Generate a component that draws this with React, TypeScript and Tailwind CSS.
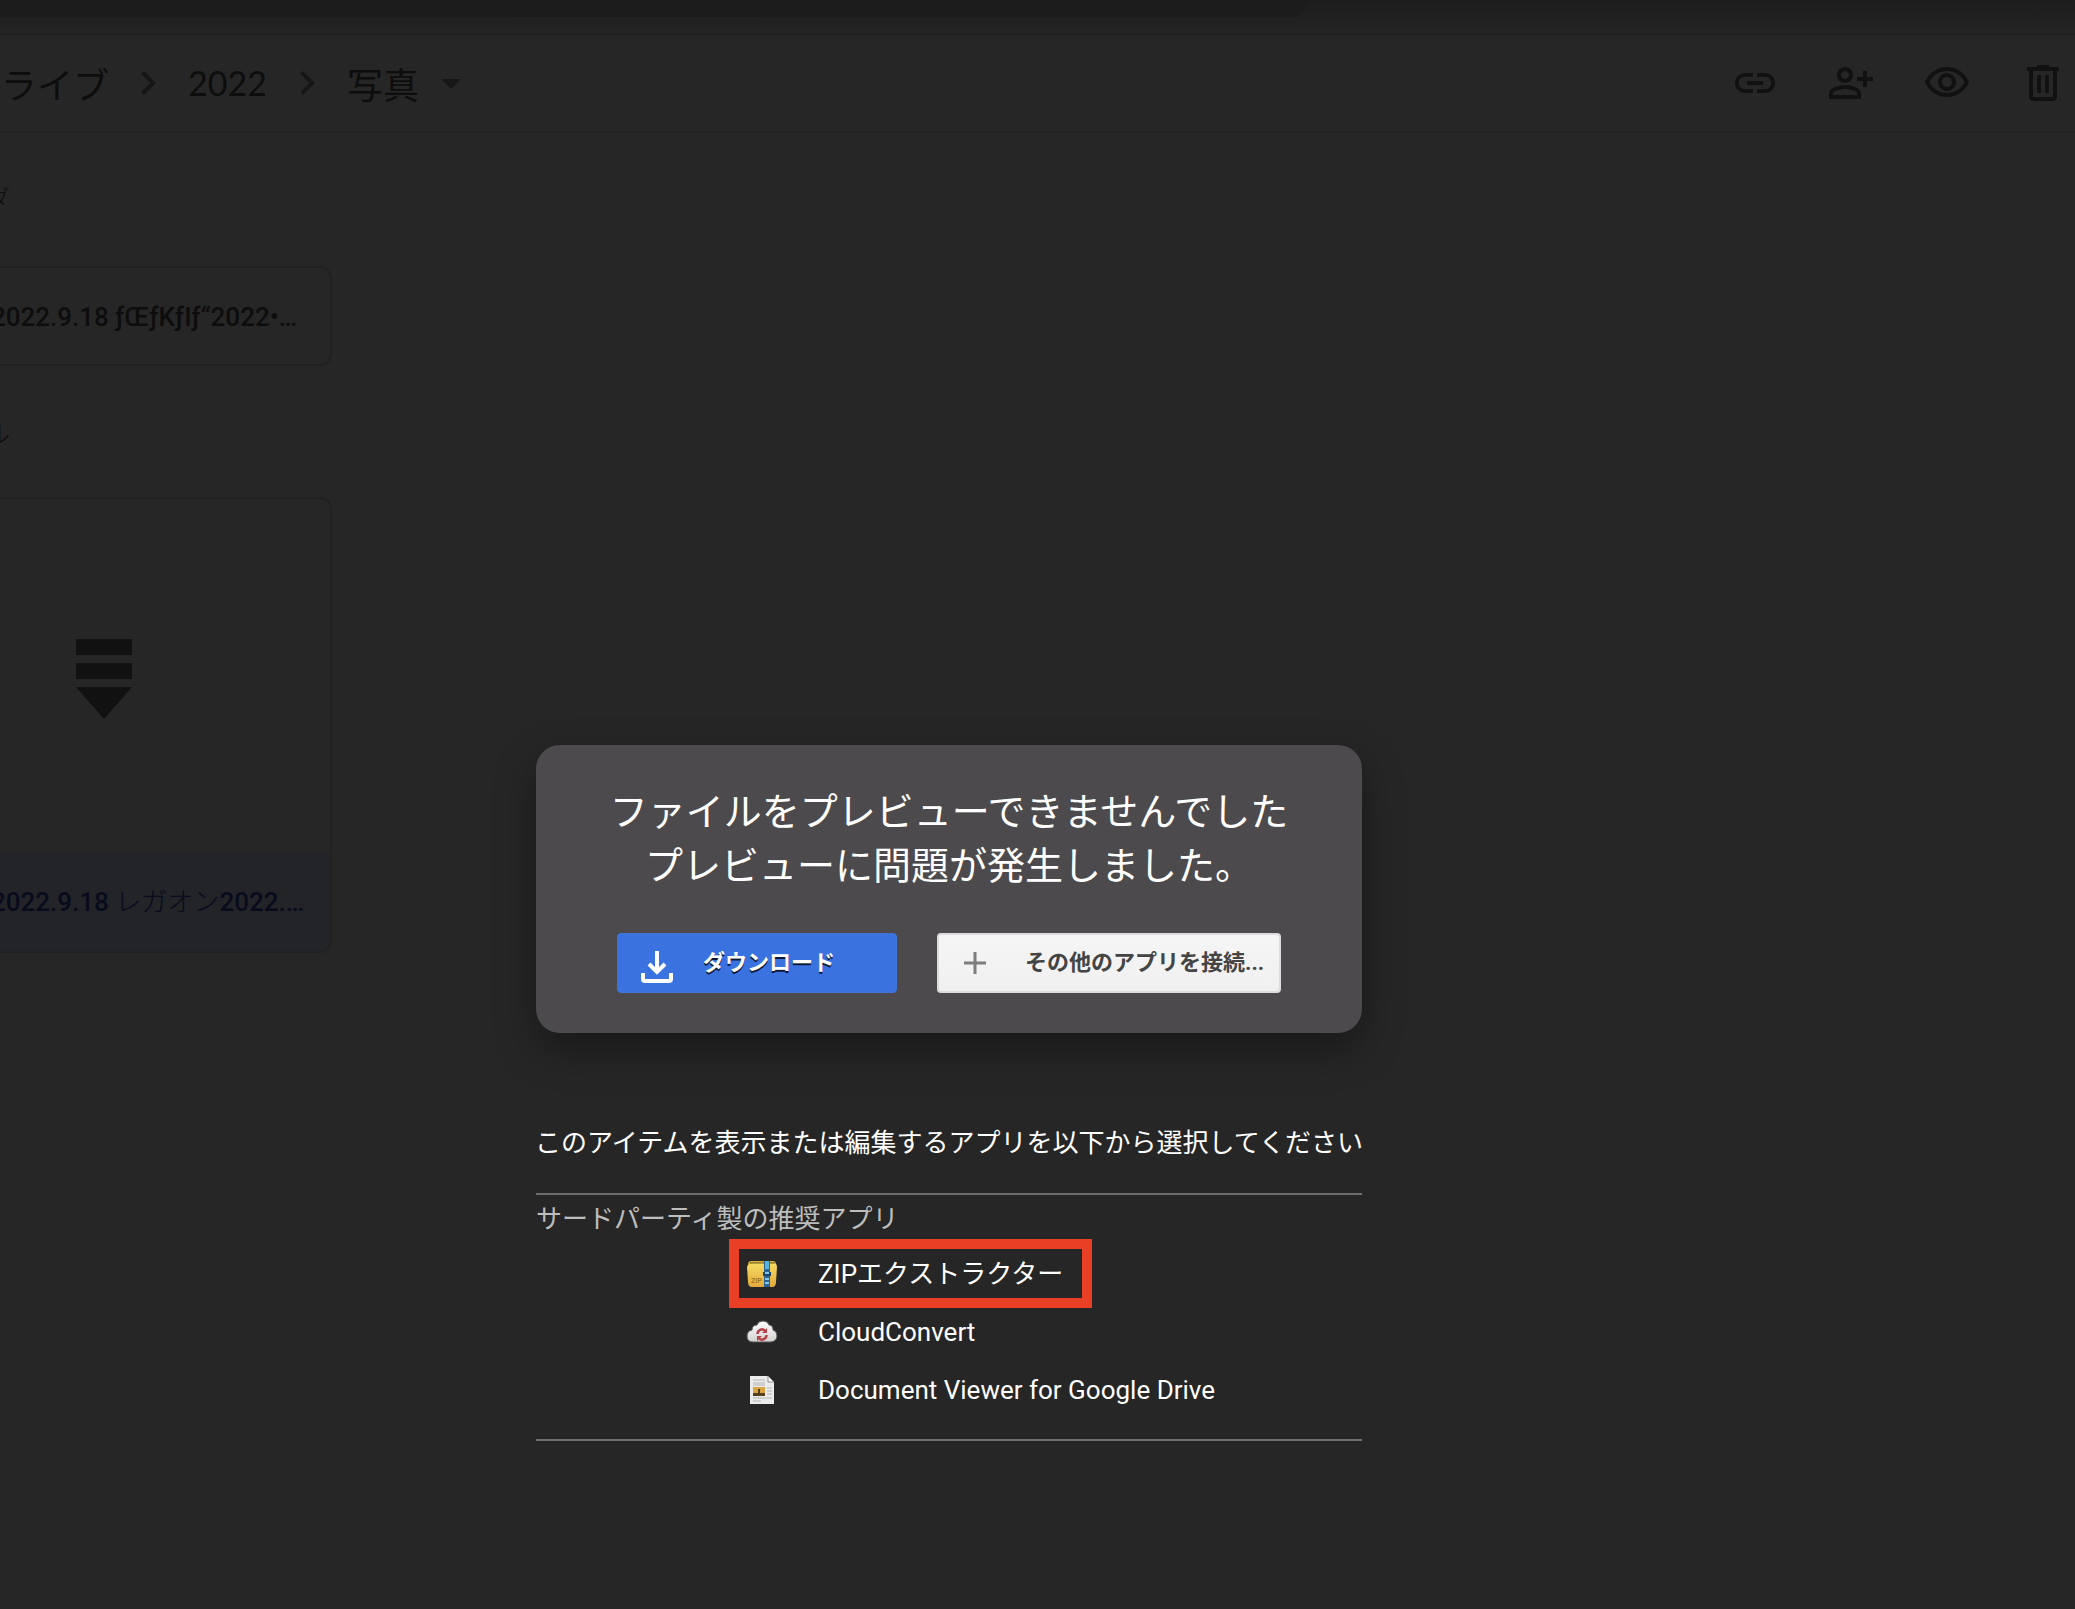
import React from "react";

const jp = "font-['Roboto','Noto_Sans_CJK_JP',sans-serif]";

function Glyph({ d }: { d: string }) {
  return (
    <svg viewBox="0 0 24 24" className="size-12 shrink-0" fill="currentColor" aria-hidden="true">
      <path fillRule="evenodd" d={d} />
    </svg>
  );
}

const chevron = "M10 6 8.59 7.41 13.17 12l-4.58 4.59L10 18l6-6z";
const caret = "M7 10l5 5 5-5z";

const actions = [
  {
    label: "リンクを取得",
    d: "M3.9 12c0-1.71 1.39-3.1 3.1-3.1h4V7H7c-2.76 0-5 2.24-5 5s2.24 5 5 5h4v-1.9H7c-1.71 0-3.1-1.39-3.1-3.1zM8 13h8v-2H8v2zm9-6h-4v1.9h4c1.71 0 3.1 1.39 3.1 3.1s-1.39 3.1-3.1 3.1h-4V17h4c2.76 0 5-2.24 5-5s-2.24-5-5-5z",
  },
  {
    label: "共有",
    d: "M13 8c0-2.21-1.79-4-4-4S5 5.79 5 8s1.79 4 4 4 4-1.79 4-4zm-2 0c0 1.1-.9 2-2 2s-2-.9-2-2 .9-2 2-2 2 .9 2 2zM1 20v-3c0-2.66 5.33-4 8-4s8 1.34 8 4v3zM3 18h12v-1c0-.7-3.3-2-6-2s-6 1.3-6 2zM20 14v-3h3V9h-3V6h-2v3h-3v2h3v3h2z",
  },
  {
    label: "プレビュー",
    d: "M12 6c3.79 0 7.17 2.13 8.82 5.5C19.17 14.87 15.79 17 12 17s-7.17-2.13-8.82-5.5C4.83 8.13 8.21 6 12 6m0-2C7 4 2.73 7.11 1 11.5 2.73 15.89 7 19 12 19s9.27-3.11 11-7.5C21.27 7.11 17 4 12 4zm0 5c1.38 0 2.5 1.12 2.5 2.5S13.38 14 12 14s-2.5-1.12-2.5-2.5S10.62 9 12 9m0-2c-2.48 0-4.5 2.02-4.5 4.5S9.52 16 12 16s4.5-2.02 4.5-4.5S14.48 7 12 7z",
  },
  {
    label: "削除",
    d: "M9 3v1H4v2h1v13c0 1.1.9 2 2 2h10c1.1 0 2-.9 2-2V6h1V4h-5V3H9zM7 6h10v13H7V6zM9 8v9h2V8H9zm4 0v9h2V8h-2z",
  },
];

function ZipIcon() {
  return (
    <svg viewBox="0 0 32 32" className="size-8 shrink-0" aria-hidden="true">
      <defs>
        <linearGradient id="zipBody" x1="0" y1="0" x2="0" y2="1">
          <stop offset="0" stopColor="#f7dc62" />
          <stop offset="1" stopColor="#e2a93a" />
        </linearGradient>
      </defs>
      <path d="M5 3h22q3 0 3 4v3H2V7q0-4 3-4z" fill="#d9b040" />
      <path d="M4 6q1-1 3-1h20q4 0 4 4l-1 15q0 5-4 5H6q-4 0-4-5L1 9q0-2 3-3z" fill="url(#zipBody)" />
      <path d="M4 5h25" stroke="#6b5a20" />
      <path d="M18 3h6v26h-6z" fill="#2c6593" />
      <path d="M19 3h4v8h-4z" fill="#55b4dc" />
      <path d="M17 14h8v4h-8z" fill="#1c4468" />
      <path d="M19 15h4M19 21h4M19 25h4" stroke="#83c7e8" strokeWidth="2" />
      <text x="5" y="25" fontSize="7" fontWeight="700" fontFamily="Roboto" fill="#a87822">ZIP</text>
    </svg>
  );
}

function CloudIcon() {
  return (
    <svg viewBox="0 0 32 32" className="size-8 shrink-0" aria-hidden="true">
      <defs>
        <linearGradient id="cloudBody" x1="0" y1="0" x2="0" y2="1">
          <stop offset="0" stopColor="#ffffff" />
          <stop offset="1" stopColor="#d3cfcf" />
        </linearGradient>
      </defs>
      <path
        d="M7 26q-6 0-6-6 0-5 5-6 0-5 5-5 1-4 6-4t6 4q4 0 4 5 4 1 4 6t-6 6z"
        fill="url(#cloudBody)"
        stroke="#555555"
        strokeWidth="1"
      />
      <path d="M11.5 18a4.5 4.5 0 0 1 7.5-3.4M20.500 19a4.500 4.500 0 0 1-7.500 3.400" fill="none" stroke="#b5444a" strokeWidth="2.5" />
      <path d="M21 12v5h-5zM11 25v-5h5z" fill="#b5444a" />
    </svg>
  );
}

function DocIcon() {
  return (
    <svg viewBox="0 0 32 32" className="size-8 shrink-0" aria-hidden="true">
      <path d="M4 2h18l6 6v22H4z" fill="#ebebeb" />
      <path d="M22 2v6h6z" fill="#ffffff" stroke="#8c8c8c" strokeWidth="1" />
      <path d="M7 6h12M7 9h12M7 11h12M21 14h5M21 17h5M21 20h5M7 24h19M7 27h8" stroke="#b5b5b5" />
      <path d="M7 13h12v9H7z" fill="#d9a441" />
      <path d="M7 19h12v3H7z" fill="#54401c" />
      <path d="M13 15v5" stroke="#54401c" strokeWidth="2" />
    </svg>
  );
}

const apps = [
  { name: "ZIPエクストラクター", Icon: ZipIcon, marked: true },
  { name: "CloudConvert", Icon: CloudIcon, marked: false },
  { name: "Document Viewer for Google Drive", Icon: DocIcon, marked: false },
];

function ClippedLabel({ children, className }: { children: React.ReactNode; className: string }) {
  return (
    <div className={`flex justify-end overflow-hidden whitespace-nowrap ${className}`}>
      <span className="shrink-0">{children}</span>
    </div>
  );
}

function DrivePage() {
  return (
    <div className="text-[#0d0d0d]">
      <div className="h-[35px] border-b-2 border-[#202020] bg-linear-to-b from-[#1d1d1d] to-[#242424]">
        <div className="h-[17px] w-[63%] rounded-br-2xl bg-[#1c1c1c]" />
      </div>
      <header className="flex h-[98px] items-center justify-between border-b-2 border-[#222222] pr-2 text-[36px] leading-[48px]">
        <nav aria-label="パンくずリスト" className="flex items-center">
          <ClippedLabel className="w-[109px] pt-2">マイドライブ</ClippedLabel>
          <span className="flex pl-[15px] pr-4 text-[#161616]"><Glyph d={chevron} /></span>
          <span className="font-['Lato','Noto_Sans_CJK_JP',sans-serif] text-[34px]">2022</span>
          <span className="flex px-4 text-[#161616]"><Glyph d={chevron} /></span>
          <button className="flex items-center">
            <span className="pt-2">写真</span>
            <span className="pl-2 text-[#161616]"><Glyph d={caret} /></span>
          </button>
        </nav>
        <div className="flex gap-12 text-[#111111]">
          {actions.map((a) => (
            <button key={a.label} aria-label={a.label}><Glyph d={a.d} /></button>
          ))}
        </div>
      </header>
      <main className="text-[26px] leading-10">
        <ClippedLabel className="mt-[46px] w-[10px] text-[24px] font-light">フォルダ</ClippedLabel>
        <div className="-ml-[124px] mt-[47px] flex h-[100px] w-[456px] items-center rounded-xl border-2 border-[#212121] pl-[113px] pt-[2px] font-medium">
          <span className="whitespace-nowrap">2022.9.18 ƒŒƒKƒIƒ“2022•…</span>
        </div>
        <ClippedLabel className="mt-[49px] w-[10px] text-[24px] font-light">ファイル</ClippedLabel>
        <div className="-ml-[124px] mt-[42px] w-[456px] overflow-hidden rounded-xl border-2 border-[#212121]">
          <div className="flex h-[354px] items-center justify-center pt-[6px]">
            <svg viewBox="0 0 56 80" className="h-20 w-14" fill="#111111" aria-hidden="true">
              <path d="M0 0h56v16H0zM0 24h56v16H0zM0 48h56L28 80z" />
            </svg>
          </div>
          <div className="flex h-[98px] items-center bg-[#222427] pl-[113px] font-medium text-[#070b1c]">
            <span className="whitespace-nowrap">
              2022.9.18 <span className="font-light">レガオン</span>2022.…
            </span>
          </div>
        </div>
      </main>
    </div>
  );
}

function PreviewError() {
  return (
    <div className="absolute inset-0 flex justify-center pr-[177px] pt-[745px]">
      <div className="w-[826px]">
        <section
          role="dialog"
          aria-label="プレビューエラー"
          className="rounded-3xl bg-[#4c4a4d] pb-10 pt-10 shadow-[0_16px_40px_rgba(0,0,0,0.35)]"
        >
          <p className="text-center text-[38px] leading-[54px] text-white">
            ファイルをプレビューできませんでした
            <br />
            プレビューに問題が発生しました。
          </p>
          <div className="mt-10 flex justify-center gap-10 whitespace-nowrap text-[22px] font-bold leading-8">
            <button className="flex h-[60px] w-[280px] items-center gap-[30px] rounded-sm border border-[#3f76d8] bg-[#3a72e0] pl-[23px] text-white">
              <svg viewBox="0 0 32 32" className="mt-2 size-8 shrink-0" fill="none" stroke="currentColor" strokeWidth="4" aria-hidden="true">
                <path d="M16 0v21M8 13l8 8 8-8" />
                <path d="M2 22v6q0 2 2 2h24q2 0 2-2v-6" />
              </svg>
              <span className="[text-shadow:0_2px_0_rgba(0,0,0,0.8)]">ダウンロード</span>
            </button>
            <button className="flex h-[60px] w-[344px] items-center gap-[34px] rounded-sm border-2 border-[#dcdcdc] bg-linear-to-b from-[#f5f5f5] to-[#f0f0f0] pl-5 text-[#444444]">
              <svg viewBox="0 0 32 32" className="size-8 shrink-0" stroke="#7d7d7d" strokeWidth="3" aria-hidden="true">
                <path d="M16 5v22M5 16h22" />
              </svg>
              <span>その他のアプリを接続...</span>
            </button>
          </div>
        </section>

        <div className="text-[26px] leading-10 text-white">
          <p className="mt-[90px] flex justify-center whitespace-nowrap">
            このアイテムを表示または編集するアプリを以下から選択してください
          </p>
          <section className="mt-[30px] border-y-2 border-[#6e6e6e] pb-5 pt-1">
            <h2 className="text-[#bdbdbd]">サードパーティ製の推奨アプリ</h2>
            <ul className="ml-[210px] pt-[6px]">
              {apps.map(({ name, Icon, marked }) => (
                <li key={name} className="relative">
                  <a href="#" className="flex h-[58px] items-center gap-10 whitespace-nowrap">
                    <Icon />
                    <span>{name}</span>
                  </a>
                  {marked && (
                    <div className="pointer-events-none absolute -left-[17px] -top-[6px] h-[69px] w-[363px] border-[10px] border-[#e83f25]" />
                  )}
                </li>
              ))}
            </ul>
          </section>
        </div>
      </div>
    </div>
  );
}

export default function App() {
  return (
    <div lang="ja" className={`relative min-h-screen overflow-hidden bg-[#262626] ${jp}`}>
      <DrivePage />
      <PreviewError />
    </div>
  );
}
